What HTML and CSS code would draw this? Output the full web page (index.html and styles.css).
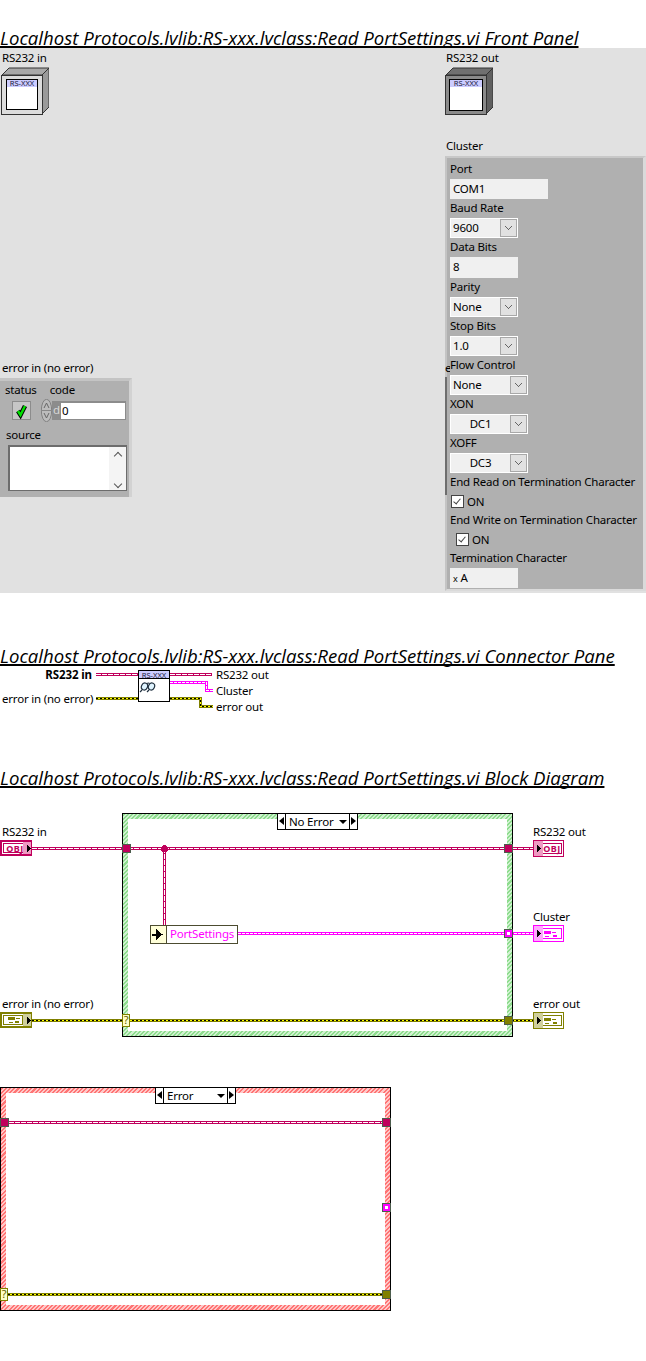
FILE: index.html
```html
<!doctype html>
<html>
  <head>
    <title>Read PortSettings.vi</title>
    <link rel="stylesheet" href="styles.css">
  </head>
  <body>
    <h2 class="title title-first">Localhost Protocols.lvlib:RS-xxx.lvclass:Read PortSettings.vi Front Panel</h2>
    <div class="panel">
      <div class="lbl rs-in-lbl">RS232 in</div>
      <svg class="vi-box box-in" viewBox="0 0 48 48">
        <path class="box-top" d="M1 8 L8 1 H48 L41 8 Z"/>
        <path class="box-side" d="M41 8 L48 1 V40 L41 47 Z"/>
        <rect class="box-front" x="0.5" y="8.5" width="41" height="39"/>
        <rect class="box-screen" x="5.5" y="12.5" width="31" height="30"/>
        <rect class="box-head" x="6" y="13" width="30" height="7"/>
        <text class="box-txt" x="21" y="19" text-anchor="middle">RS-XXX</text>
      </svg>
      <div class="lbl rs-out-lbl">RS232 out</div>
      <svg class="vi-box box-out" viewBox="0 0 48 48">
        <path class="box-top" d="M1 8 L8 1 H48 L41 8 Z"/>
        <path class="box-side" d="M41 8 L48 1 V40 L41 47 Z"/>
        <rect class="box-front" x="0.5" y="8.5" width="41" height="39"/>
        <rect class="box-screen" x="4.5" y="12.5" width="33" height="31"/>
        <rect class="box-head" x="5" y="13" width="32" height="7"/>
        <text class="box-txt" x="21" y="19" text-anchor="middle">RS-XXX</text>
      </svg>

      <div class="lbl err-lbl">error in (no error)</div>
      <div class="err-cluster">
        <div class="err-head">
          <span>status</span>
          <span>code</span>
        </div>
        <div class="err-controls">
          <svg class="status-btn" viewBox="0 0 19 19">
            <rect class="status-bg" x="0.5" y="0.5" width="18" height="18"/>
            <path class="check-back" d="M6 10 L8.500 14 L13 5"/>
            <path class="check-front" d="M6 10 L8.500 14 L13 5"/>
          </svg>
          <svg class="spinner" viewBox="0 0 11 23">
            <ellipse class="spin-body" cx="5.5" cy="11.5" rx="5.2" ry="11.2"/>
            <path class="spin-line" d="M0 11.5 H11"/>
            <path class="spin-arrow" d="M3 9 L5.5 4 L8 9 M3 14 L5.5 19 L8 14"/>
          </svg>
          <div class="code-field"><span class="radix">d</span><span class="code-val">0</span></div>
        </div>
        <div class="source-lbl">source</div>
        <div class="source-box">
          <div class="scroll-col">
            <span class="scroll-up"></span>
            <span class="scroll-down"></span>
          </div>
        </div>
      </div>

      <div class="lbl cluster-lbl">Cluster</div>
      <div class="cluster">
        <div class="cl-clip">e</div>
        <div class="cl-shadow"></div>
        <div class="cl-lbl">Port</div>
        <div class="field w98">COM1</div>
        <div class="cl-lbl">Baud Rate</div>
        <div class="ring w68"><span>9600</span></div>
        <div class="cl-lbl">Data Bits</div>
        <div class="field w68 tall">8</div>
        <div class="cl-lbl">Parity</div>
        <div class="ring w68"><span>None</span></div>
        <div class="cl-lbl">Stop Bits</div>
        <div class="ring w68"><span>1.0</span></div>
        <div class="cl-lbl">Flow Control</div>
        <div class="ring w78"><span>None</span></div>
        <div class="cl-lbl">XON</div>
        <div class="ring w78 centered"><span>DC1</span></div>
        <div class="cl-lbl">XOFF</div>
        <div class="ring w78 centered"><span>DC3</span></div>
        <div class="cl-lbl">End Read on Termination Character</div>
        <div class="check"><span class="tick"></span>ON</div>
        <div class="cl-lbl">End Write on Termination Character</div>
        <div class="check indent"><span class="tick"></span>ON</div>
        <div class="cl-lbl">Termination Character</div>
        <div class="field w68"><span class="small-x">x</span>A</div>
      </div>
    </div>

    <h2 class="title">Localhost Protocols.lvlib:RS-xxx.lvclass:Read PortSettings.vi Connector Pane</h2>
    <div class="canvas connector">
      <div class="lbl cp-rs-in">RS232 in</div>
      <div class="lbl cp-err-in">error in (no error)</div>
      <div class="lbl cp-rs-out">RS232 out</div>
      <div class="lbl cp-cluster">Cluster</div>
      <div class="lbl cp-err-out">error out</div>
      <svg class="wires" viewBox="0 666 646 49">
        <g class="w-obj">
          <path d="M96 674.5 H138 M170 674.5 H212"/>
          <path d="M96 674.5 H138 M170 674.5 H212"/>
        </g>
        <g class="w-clu">
          <path d="M170 682.5 H206.5 V690.5 H213"/>
          <path d="M170 682.5 H206.5 V690.5 H213"/>
        </g>
        <g class="w-err">
          <path d="M96 698.5 H138 M170 698.5 H200.5 V706.5 H213"/>
          <path d="M96 698.5 H138 M170 698.5 H200.5 V706.5 H213"/>
          <path d="M96 698.5 H138 M170 698.5 H200.5 V706.5 H213"/>
        </g>
        <rect class="vi-node" x="138.5" y="670.5" width="31" height="31"/>
        <rect class="vi-head" x="139" y="671" width="30" height="7"/>
        <path class="vi-line" d="M139 678.5 H169"/>
        <text class="box-txt" x="154" y="677.500" text-anchor="middle">RS-XXX</text>
        <g class="glasses">
          <ellipse cx="144.500" cy="686.500" rx="3" ry="3.6" transform="rotate(25 144.500 686.500)"/>
          <ellipse cx="151.500" cy="686.500" rx="3" ry="3.6" transform="rotate(25 151.500 686.500)"/>
          <path d="M147 683.500 Q148.500 682.500 149.500 683.500 M142 690 L140 692 M149 690 L147 692"/>
        </g>
      </svg>
    </div>

    <h2 class="title title-diagram">Localhost Protocols.lvlib:RS-xxx.lvclass:Read PortSettings.vi Block Diagram</h2>
    <div class="canvas diagram">
      <div class="lbl bd-rs-in">RS232 in</div>
      <div class="lbl bd-err-in">error in (no error)</div>
      <div class="lbl bd-rs-out">RS232 out</div>
      <div class="lbl bd-cluster">Cluster</div>
      <div class="lbl bd-err-out">error out</div>

      <div class="case case-ok"><div class="case-inner"></div></div>
      <div class="selector sel-ok">
        <span class="sel-arrow sel-prev"></span>
        <span class="sel-mid">No Error<i class="sel-drop"></i></span>
        <span class="sel-arrow sel-next"></span>
      </div>

      <div class="case case-err"><div class="case-inner"></div></div>
      <div class="selector sel-err">
        <span class="sel-arrow sel-prev"></span>
        <span class="sel-mid">Error<i class="sel-drop"></i></span>
        <span class="sel-arrow sel-next"></span>
      </div>

      <svg class="wires" viewBox="0 788 646 573">
        <g class="w-obj">
          <path d="M32 848.5 H533 M164.500 848 V925 M9 1122.500 H382"/>
          <path d="M32 848.5 H533 M164.500 848 V925 M9 1122.500 H382"/>
        </g>
        <g class="w-clu">
          <path d="M238 933.500 H533"/>
          <path d="M238 933.500 H533"/>
        </g>
        <g class="w-err">
          <path d="M32 1020.500 H533 M8 1294.500 H382"/>
          <path d="M32 1020.500 H533 M8 1294.500 H382"/>
          <path d="M32 1020.500 H533 M8 1294.500 H382"/>
        </g>
        <circle class="junction" cx="164.500" cy="848.500" r="3.500"/>

        <rect class="tun t-obj" x="122.500" y="844.500" width="8" height="8"/>
        <rect class="tun t-obj" x="504.500" y="844.500" width="8" height="8"/>
        <rect class="tun t-clu" x="504.500" y="929.500" width="8" height="8"/>
        <rect class="tun-dot" x="507" y="932" width="3" height="3"/>
        <rect class="tun t-err" x="504.500" y="1016.500" width="8" height="8"/>
        <rect class="sel-term" x="122.500" y="1014.500" width="7" height="12"/>
        <text class="q" x="126" y="1024" text-anchor="middle">?</text>

        <rect class="tun t-obj" x="0.500" y="1118.500" width="8" height="8"/>
        <rect class="tun t-obj" x="382.500" y="1118.500" width="8" height="8"/>
        <rect class="tun t-clu" x="382.500" y="1203.500" width="8" height="8"/>
        <rect class="tun-dot" x="385" y="1206" width="3" height="3"/>
        <rect class="tun t-err" x="382.500" y="1290.500" width="8" height="8"/>
        <rect class="sel-term" x="0.500" y="1288.500" width="7" height="12"/>
        <text class="q" x="4" y="1298" text-anchor="middle">?</text>

        <!-- PortSettings node -->
        <rect class="node-in" x="150.500" y="925.500" width="16" height="18"/>
        <path class="node-arrow" d="M152 934.500 H158 M157 931 L161 934.500 L157 938 Z"/>
        <rect class="node-prop" x="166.500" y="925.500" width="71" height="18"/>
        <text class="node-txt" x="170" y="938">PortSettings</text>

        <!-- controls -->
        <rect class="term-out c-obj" x="1" y="841" width="30" height="14"/>
        <rect class="term-in c-obj" x="3.500" y="843.500" width="25" height="9"/>
        <rect class="term-tint c-obj-tint" x="23" y="842" width="8" height="12"/>
        <text class="obj-txt" x="15" y="852" text-anchor="middle">OBJ</text>
        <path class="tri" d="M27 844.500 L31 848.500 L27 852.500 Z"/>

        <rect class="term-out c-err" x="1" y="1013" width="30" height="14"/>
        <rect class="term-in c-err" x="3.500" y="1015.500" width="19" height="9"/>
        <rect class="term-tint c-err-tint" x="23" y="1014" width="8" height="12"/>
        <path class="bits-err" d="M8 1017 H15 V1020 H8 Z M16 1018 H20 V1019 H16 Z M9 1022 H13 V1023 H9 Z M15 1021 H19 V1023 H15 Z"/>
        <path class="tri" d="M27 1016.500 L31 1020.500 L27 1024.500 Z"/>

        <!-- indicators -->
        <rect class="ind c-obj" x="533.500" y="840.500" width="30" height="16"/>
        <rect class="term-in c-obj" x="536.500" y="843.500" width="25" height="10"/>
        <rect class="ind-tint c-obj-tint" x="534" y="841" width="9" height="15"/>
        <text class="obj-txt" x="552" y="852" text-anchor="middle">OBJ</text>
        <path class="tri" d="M537 844.500 L541 848.500 L537 852.500 Z"/>

        <rect class="ind c-clu" x="533.500" y="925.500" width="30" height="16"/>
        <rect class="term-in c-clu" x="536.500" y="928.500" width="25" height="10"/>
        <rect class="ind-tint c-clu-tint" x="534" y="926" width="9" height="15"/>
        <path class="bits-clu" d="M544 931 H551 V934 H544 Z M552 932 H556 V933 H552 Z M545 936 H549 V937 H545 Z M553 935 H557 V937 H553 Z"/>
        <path class="tri" d="M537 929.500 L541 933.500 L537 937.500 Z"/>

        <rect class="ind c-err" x="533.500" y="1012.500" width="30" height="16"/>
        <rect class="term-in c-err" x="536.500" y="1015.500" width="25" height="10"/>
        <rect class="ind-tint c-err-tint" x="534" y="1013" width="9" height="15"/>
        <path class="bits-err" d="M544 1018 H551 V1021 H544 Z M552 1019 H556 V1020 H552 Z M545 1023 H549 V1024 H545 Z M553 1022 H557 V1024 H553 Z"/>
        <path class="tri" d="M537 1016.500 L541 1020.500 L537 1024.500 Z"/>
      </svg>
    </div>
  </body>
</html>
```
FILE: styles.css
```css
body {
  font-family: "Noto Sans", "Open Sans", sans-serif;
  font-size: 11.5px;
  letter-spacing: -0.2px;
  margin: 0px;
  background-color: white;
  color: black;
}
svg text {
  font-family: "Noto Sans", sans-serif;
}
.title {
  font-family: "Open Sans", sans-serif;
  font-size: 18.6px;
  font-weight: normal;
  font-style: italic;
  letter-spacing: 0px;
  line-height: 20px;
  height: 20px;
  margin: 53px 0px 0px 0px;
  white-space: nowrap;
  text-decoration: underline;
  text-decoration-thickness: 2px;
  text-underline-offset: 1px;
  text-decoration-skip-ink: none;
}
.title-first {
  margin-top: 28px;
}
.lbl {
  position: absolute;
  line-height: 15px;
  white-space: nowrap;
}
.panel {
  position: relative;
  height: 545px;
  background-color: #e1e1e1;
}
.rs-in-lbl { left: 2px; top: 2px; }
.rs-out-lbl { left: 446px; top: 2px; }
.cluster-lbl { left: 446px; top: 90px; }
.err-lbl { left: 2px; top: 312px; }

.vi-box {
  position: absolute;
  top: 19px;
  width: 48px;
  height: 48px;
}
.box-in { left: 1px; }
.box-out { left: 445px; }
.box-top, .box-side, .box-front {
  stroke: #333333;
  stroke-width: 1;
}
.box-in .box-top { fill: #a8a8a8; }
.box-in .box-side { fill: #9a9a9a; }
.box-in .box-front { fill: #dcdcdc; }
.box-out .box-top { fill: #707070; }
.box-out .box-side { fill: #606060; }
.box-out .box-front { fill: #8a8a8a; }
.box-screen {
  fill: white;
  stroke: black;
  stroke-width: 1;
}
.box-head { fill: #ccccff; }
.box-txt {
  font-size: 7.5px;
  letter-spacing: 0px;
  fill: #202040;
}

/* error cluster */
.err-cluster {
  position: absolute;
  left: 0px;
  top: 330px;
  width: 129px;
  height: 116px;
  background-color: #b0b0b0;
  border-top: 3px solid #c4c4c4;
  border-right: 3px solid #d2d2d2;
}
.err-head {
  display: flex;
  gap: 13px;
  padding: 1px 0px 0px 5px;
  height: 17px;
  line-height: 15px;
}
.err-controls {
  display: flex;
  align-items: center;
  padding-left: 12px;
  height: 23px;
}
.status-btn {
  width: 19px;
  height: 19px;
  margin-right: 10px;
}
.status-bg {
  fill: #c6c6c6;
  stroke: #8c8c8c;
  stroke-width: 1;
}
.check-back {
  fill: none;
  stroke: black;
  stroke-width: 4.5;
}
.check-front {
  fill: none;
  stroke: #00e000;
  stroke-width: 2.5;
}
.spinner {
  width: 11px;
  height: 23px;
}
.spin-body {
  fill: #bcbcbc;
  stroke: #808080;
  stroke-width: 1;
}
.spin-line {
  stroke: #888888;
  stroke-width: 1;
}
.spin-arrow {
  fill: none;
  stroke: #666666;
  stroke-width: 1;
}
.code-field {
  display: flex;
  width: 74px;
  height: 19px;
  background-color: #8c8c8c;
  line-height: 17px;
}
.radix {
  width: 9px;
  text-align: center;
  color: #d8d8d8;
}
.code-val {
  flex: 1;
  margin: 2px 1px 0px 0px;
  background-color: white;
  line-height: 16px;
  height: 16px;
  padding-left: 1px;
}
.source-lbl {
  padding: 5px 0px 0px 6px;
  line-height: 15px;
  height: 18px;
}
.source-box {
  display: flex;
  justify-content: flex-end;
  margin-left: 8px;
  width: 116px;
  height: 43px;
  background-color: white;
  border: 1px solid #6c6c6c;
  border-top: 2px solid #6c6c6c;
  border-left: 2px solid #6c6c6c;
}
.scroll-col {
  display: flex;
  flex-direction: column;
  justify-content: space-between;
  align-items: center;
  width: 17px;
  padding: 6px 0px 3px 0px;
  background-color: #f4f4f4;
}
.scroll-up, .scroll-down {
  width: 5px;
  height: 5px;
  border-left: 1.5px solid #555555;
  border-top: 1.5px solid #555555;
  transform: rotate(45deg);
}
.scroll-down {
  transform: rotate(225deg);
}

/* settings cluster */
.cluster {
  position: absolute;
  left: 445px;
  top: 108px;
  width: 193px;
  height: 427px;
  background-color: #b0b0b0;
  border-top: 2px solid #c8c8c8;
  border-left: 2px solid #c4c4c4;
  border-right: 3px solid #dadada;
  border-bottom: 2px solid #dadada;
  padding: 4px 0px 0px 3px;
}
.cl-clip {
  position: absolute;
  left: -2px;
  top: 202px;
  width: 5px;
  overflow: hidden;
  line-height: 15px;
}
.cl-shadow {
  position: absolute;
  left: -2px;
  top: 219px;
  width: 2px;
  height: 118px;
  background-color: #6e6e6e;
}
.cl-lbl {
  height: 17px;
  line-height: 13px;
  white-space: nowrap;
}
.field {
  height: 20px;
  line-height: 20px;
  margin-bottom: 2px;
  padding-left: 3px;
  box-sizing: border-box;
  background-color: #f0f0f0;
}
.field.tall {
  height: 21px;
}
.w98 { width: 98px; }
.w68 { width: 68px; }
.w78 { width: 78px; }
.ring {
  display: flex;
  height: 20px;
  margin-bottom: 2px;
  box-sizing: border-box;
  border: 1px solid white;
  background-color: #f0f0f0;
  line-height: 18px;
}
.ring span {
  flex: 1;
  padding-left: 2px;
}
.ring.centered span {
  padding-left: 0px;
  text-align: center;
}
.ring::after {
  content: "";
  width: 17px;
  box-sizing: border-box;
  border: 1px solid #a8a8a8;
  background-color: #e1e1e1;
  background-image: linear-gradient(45deg, transparent 44%, #666666 44%, #666666 56%, transparent 56%), linear-gradient(-45deg, transparent 44%, #666666 44%, #666666 56%, transparent 56%);
  background-size: 4px 4px, 4px 4px;
  background-position: 4px 6px, 7px 6px;
  background-repeat: no-repeat;
  flex: none;
}
.check {
  display: flex;
  align-items: center;
  gap: 3px;
  height: 19px;
  margin-bottom: 2px;
  padding-left: 1px;
  line-height: 19px;
}
.check.indent {
  padding-left: 6px;
}
.tick {
  position: relative;
  width: 11px;
  height: 11px;
  border: 1px solid #444444;
  background-color: white;
}
.tick::after {
  content: "";
  position: absolute;
  left: 3px;
  top: 1px;
  width: 3px;
  height: 6px;
  border-right: 1px solid #444444;
  border-bottom: 1px solid #444444;
  transform: rotate(40deg);
}
.small-x {
  font-size: 9px;
  margin-right: 3px;
}

/* connector pane and block diagram */
.canvas {
  position: relative;
}
.connector {
  height: 49px;
}
.diagram {
  height: 573px;
}
.wires {
  position: absolute;
  left: 0px;
  top: 0px;
  width: 646px;
  height: 100%;
  shape-rendering: crispEdges;
}
.cp-rs-in { right: 554px; top: 1px; font-weight: bold; letter-spacing: -0.1px; }
.cp-err-in { left: 2px; top: 25px; }
.cp-rs-out { left: 216px; top: 1px; }
.cp-cluster { left: 216px; top: 17px; }
.cp-err-out { left: 216px; top: 33px; }

.bd-rs-in { left: 2px; top: 36px; }
.bd-err-in { left: 2px; top: 208px; }
.bd-rs-out { left: 533px; top: 36px; }
.bd-cluster { left: 533px; top: 121px; }
.bd-err-out { left: 533px; top: 208px; }

path { fill: none; }
.w-obj path:nth-child(1) { stroke: #c0005c; stroke-width: 3; }
.w-obj path:nth-child(2) { stroke: white; stroke-width: 1; stroke-dasharray: 5 1; }
.w-clu path:nth-child(1) { stroke: #ff00ff; stroke-width: 3; }
.w-clu path:nth-child(2) { stroke: white; stroke-width: 1; stroke-dasharray: 3 1; }
.w-err path:nth-child(1) { stroke: #808000; stroke-width: 3; }
.w-err path:nth-child(2) { stroke: #ffff00; stroke-width: 1; }
.w-err path:nth-child(3) { stroke: black; stroke-width: 1; stroke-dasharray: 2 2; }
.junction { fill: #c0005c; }

.vi-node {
  fill: white;
  stroke: black;
  stroke-width: 1;
}
.vi-head { fill: #ccccff; }
.vi-line { stroke: black; stroke-width: 1; }
.glasses {
  shape-rendering: auto;
}
.glasses ellipse {
  fill: #e0f4ff;
  stroke: #203040;
  stroke-width: 1.2;
}
.glasses path {
  stroke: #203040;
  stroke-width: 1.2;
}

.case {
  position: absolute;
  box-sizing: border-box;
  border: 1px solid black;
  padding: 5px;
}
.case-inner {
  height: 100%;
  background-color: white;
}
.case-ok {
  left: 122px;
  top: 25px;
  width: 391px;
  height: 224px;
  background-image: repeating-linear-gradient(135deg, #8edc8e 0px, #8edc8e 1.5px, #d0f2d0 1.5px, #d0f2d0 3px);
}
.case-err {
  left: 0px;
  top: 299px;
  width: 391px;
  height: 224px;
  background-image: repeating-linear-gradient(135deg, #ff7474 0px, #ff7474 1.5px, #ffc8c8 1.5px, #ffc8c8 3px);
}
.selector {
  position: absolute;
  display: flex;
  box-sizing: border-box;
  width: 81px;
  height: 17px;
  border: 1px solid black;
  background-color: white;
  line-height: 15px;
  white-space: nowrap;
}
.sel-ok { left: 277px; top: 25px; }
.sel-err { left: 155px; top: 299px; }
.sel-arrow {
  position: relative;
  width: 7px;
  flex: none;
}
.sel-prev { border-right: 1px solid black; }
.sel-next { border-left: 1px solid black; }
.sel-arrow::after {
  content: "";
  position: absolute;
  top: 3px;
  border-top: 4px solid transparent;
  border-bottom: 4px solid transparent;
}
.sel-prev::after { left: 1px; border-right: 5px solid black; }
.sel-next::after { left: 1px; border-left: 5px solid black; }
.sel-mid {
  display: flex;
  flex: 1;
  align-items: center;
  justify-content: space-between;
  padding: 0px 2px 0px 3px;
}
.sel-drop {
  width: 0px;
  height: 0px;
  border-left: 4px solid transparent;
  border-right: 4px solid transparent;
  border-top: 4px solid black;
}

.tun { stroke: #4c5c4c; stroke-width: 1; }
.t-obj { fill: #c0005c; }
.t-clu { fill: #ff00ff; }
.t-err { fill: #808000; }
.tun-dot { fill: white; }
.sel-term {
  fill: #ffffc8;
  stroke: #808000;
  stroke-width: 1;
}
.q {
  font-size: 11px;
  fill: #606000;
}
.node-in {
  fill: #ffffd8;
  stroke: #4c4c30;
  stroke-width: 1;
}
.node-prop {
  fill: white;
  stroke: #4c4c30;
  stroke-width: 1;
}
.node-arrow {
  stroke: black;
  stroke-width: 2;
  fill: black;
}
.node-txt {
  font-size: 11.5px;
  letter-spacing: -0.2px;
  fill: #ff00ff;
}
.term-out {
  fill: white;
  stroke-width: 2;
}
.term-in {
  fill: white;
  stroke-width: 1;
}
.ind {
  fill: white;
  stroke-width: 1;
}
.c-obj { stroke: #c0005c; }
.c-clu { stroke: #ff00ff; }
.c-err { stroke: #808000; }
.c-obj-tint { fill: #ee9ac2; stroke: none; }
.c-clu-tint { fill: #ffa8ff; stroke: none; }
.c-err-tint { fill: #cfcf9c; stroke: none; }
.obj-txt {
  font-size: 9px;
  font-weight: bold;
  letter-spacing: 0.4px;
  fill: #c0005c;
}
.tri {
  fill: black;
}
.bits-err { fill: #808000; }
.bits-clu { fill: #ff00ff; }
```
